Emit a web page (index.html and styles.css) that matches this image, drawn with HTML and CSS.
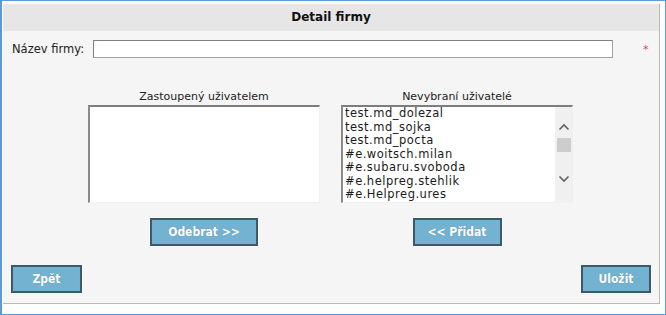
FILE: index.html
```html
<!DOCTYPE html>
<html lang="cs">
<head>
    <meta charset="UTF-8">
    <title>Detail firmy</title>
    <link rel="stylesheet" href="styles.css">
</head>
<body>
    <div class="frame">
        <div class="panel">
            <div class="panel-title">Detail firmy</div>

            <div class="form-row">
                <label class="form-label" for="nazev">Název firmy:</label>
                <input type="text" class="form-input" id="nazev">
                <span class="required">*</span>
            </div>

            <div class="users">
                <div class="users-label">Zastoupený uživatelem</div>
                <div class="users-label">Nevybraní uživatelé</div>

                <div class="list-box"></div>
                <div class="list-box">
                    <ul class="list-items">
                        <li>test.md_dolezal</li>
                        <li>test.md_sojka</li>
                        <li>test.md_pocta</li>
                        <li>#e.woitsch.milan</li>
                        <li>#e.subaru.svoboda</li>
                        <li>#e.helpreg.stehlik</li>
                        <li>#e.Helpreg.ures</li>
                    </ul>
                    <div class="scrollbar">
                        <svg class="arrow" width="12" height="8" viewBox="0 0 12 8"><path d="M1.5 6.5 L6 2 L10.5 6.5" fill="none" stroke="#606060" stroke-width="1.6"/></svg>
                        <div class="thumb"></div>
                        <svg class="arrow arrow-down" width="12" height="8" viewBox="0 0 12 8"><path d="M1.5 1.5 L6 6 L10.5 1.5" fill="none" stroke="#606060" stroke-width="1.6"/></svg>
                    </div>
                </div>

                <div class="users-action"><button class="btn btn-move">Odebrat &gt;&gt;</button></div>
                <div class="users-action"><button class="btn btn-add">&lt;&lt; Přidat</button></div>
            </div>

            <div class="footer">
                <button class="btn btn-back">Zpět</button>
                <button class="btn btn-save">Uložit</button>
            </div>
        </div>
    </div>
</body>
</html>
```

FILE: styles.css
```css
body {
    margin: 0;
    background-color: #ffffff;
    font-family: "DejaVu Sans", Tahoma, sans-serif;
    font-size: 11px;
    color: #222222;
}

.frame {
    width: 666px;
    height: 315px;
    box-sizing: border-box;
    border: 1px solid #5b9bd5;
    border-left-width: 2px;
    padding: 3px 5px 10px 1px;
}

.panel {
    height: 100%;
    box-sizing: border-box;
    background-color: #f5f5f5;
    border-right: 1px solid #b8b8b8;
    border-bottom: 1px solid #b8b8b8;
    display: flex;
    flex-direction: column;
}

.panel-title {
    height: 27px;
    line-height: 27px;
    background-color: #e6e6e6;
    text-align: center;
    font-weight: bold;
    font-size: 12px;
    color: #111111;
}

.form-row {
    display: flex;
    align-items: center;
    padding: 9px 0 0 9px;
}

.form-label {
    width: 81px;
    font-size: 11.5px;
}

.form-input {
    width: 520px;
    height: 18px;
    box-sizing: border-box;
    margin: 0;
    border: 1px solid #a0a0a0;
    border-top-color: #808080;
    border-left-color: #808080;
    background-color: #ffffff;
}

.required {
    margin-left: 30px;
    color: #e0405a;
    font-size: 11px;
}

.users {
    display: grid;
    grid-template-columns: 232px 232px;
    column-gap: 21px;
    margin: 32px 0 0 85px;
}

.users-label {
    text-align: center;
    line-height: 13px;
    margin-bottom: 2px;
}

.list-box {
    height: 98px;
    box-sizing: border-box;
    background-color: #ffffff;
    border-top: 2px solid #7d7d7d;
    border-left: 2px solid #8a8a8a;
    border-right: 1px solid #f0f0f0;
    border-bottom: 1px solid #f0f0f0;
    display: flex;
    overflow: hidden;
}

.list-items {
    list-style: none;
    margin: 0;
    padding: 0 0 0 2px;
    flex: 1;
    font-size: 11.5px;
    line-height: 13.5px;
    letter-spacing: 0.5px;
    color: #1a1a1a;
}

.scrollbar {
    width: 17px;
    background-color: #f0f0f0;
    display: flex;
    flex-direction: column;
    align-items: center;
}

.arrow {
    margin-top: 16px;
}

.thumb {
    width: 14px;
    height: 14px;
    margin-top: 7px;
    background-color: #cdcdcd;
}

.arrow-down {
    margin-top: 23px;
}

.users-action {
    display: flex;
    justify-content: center;
    padding-top: 15px;
}

.btn {
    height: 28px;
    box-sizing: border-box;
    padding: 0;
    border: 2px solid #3f5866;
    background-color: #74b2d1;
    color: #ffffff;
    font-family: "DejaVu Sans Condensed", "DejaVu Sans", sans-serif;
    font-stretch: condensed;
    font-weight: bold;
    font-size: 12px;
    white-space: nowrap;
    text-shadow: 0 0 1px #5a8aa3;
    cursor: pointer;
}

.btn-move {
    width: 108px;
}

.btn-add {
    width: 89px;
}

.footer {
    display: flex;
    justify-content: space-between;
    padding: 19px 8px 0 8px;
}

.btn-back {
    width: 71px;
}

.btn-save {
    width: 70px;
}
```
